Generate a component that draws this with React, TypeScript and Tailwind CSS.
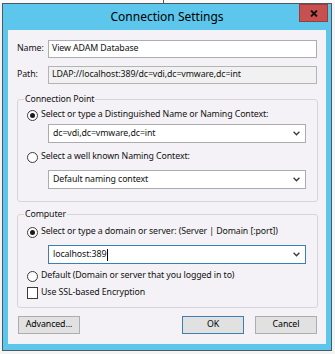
import clsx from "clsx";

function Chevron() {
  return (
    <svg width="7" height="5" viewBox="0 0 7 5" className="shrink-0">
      <path d="M0.6 0.8 L3.5 3.8 L6.4 0.8" fill="none" stroke="#3a3a3a" strokeWidth="1.3" />
    </svg>
  );
}

function Radio({ checked }: { checked?: boolean }) {
  return (
    <span className="w-[11px] h-[11px] shrink-0 rounded-full border border-[#3b3b3b] bg-white flex items-center justify-center">
      {checked && <span className="w-[5px] h-[5px] rounded-full bg-[#1a1a1a]" />}
    </span>
  );
}

function Combo({ value, focused, cursor }: { value: string; focused?: boolean; cursor?: boolean }) {
  return (
    <div
      className={clsx(
        "ml-[21px] w-[258px] h-[19px] flex items-center justify-between bg-white border pl-[4px] pr-[5px]",
        focused ? "border-[#3c7fb1]" : "border-[#acacac]"
      )}
    >
      <span className="flex items-center">
        {value}
        {cursor && <span className="ml-px w-px h-[12px] bg-black" />}
      </span>
      <Chevron />
    </div>
  );
}

function Button({ label, primary, className }: { label: string; primary?: boolean; className?: string }) {
  return (
    <button
      className={clsx(
        "w-[62px] h-[18px] flex items-center justify-center border bg-[#e1e1e1] text-black",
        primary ? "border-[#3c7fb1]" : "border-[#adadad]",
        className
      )}
    >
      {label}
    </button>
  );
}

export default function App() {
  return (
    <div className="w-[335px] h-[354px] bg-[#f4f4f4] overflow-hidden font-['Noto_Sans',sans-serif] text-[8.8px] tracking-[-0.1px] text-[#111]">
      {/* desktop strip above the dialog */}
      <div className="h-[3px] bg-[#fafafa] flex">
        <div className="ml-[163px] w-px h-full bg-[#555]" />
      </div>

      {/* dialog window */}
      <div className="ml-[2px] w-[330px] h-[348px] border border-[#4e5a61] bg-[#5cc6ec] flex flex-col">
        <div className="relative h-[26px] shrink-0 flex items-center justify-center">
          <span className="text-[12px] leading-none tracking-normal text-black">Connection Settings</span>
          <button className="absolute top-0 right-[3px] w-[29px] h-[18px] bg-[#c75050] border border-[#9a3c38] flex items-center justify-center">
            <svg width="8" height="7" viewBox="0 0 8 7">
              <path d="M1 0.5 L7 6.5 M7 0.5 L1 6.5" stroke="#111" strokeWidth="1.8" />
            </svg>
          </button>
        </div>

        <div className="px-[5px]">
          <div className="h-[314px] bg-[#f4f2f6] pl-[9px] pr-[8px] pt-[10px] flex flex-col">
            <div className="flex items-center h-[18px]">
              <span className="w-[31px]">Name:</span>
              <div className="w-[269px] h-[18px] bg-white border border-[#abadb3] pl-[3px] flex items-center">
                View ADAM Database
              </div>
            </div>
            <div className="mt-[8px] flex items-center h-[18px]">
              <span className="w-[31px]">Path:</span>
              <div className="w-[269px] h-[18px] bg-[#f1f1f1] border border-[#b4b4b4] pl-[3px] flex items-center">
                LDAP://localhost:389/dc=vdi,dc=vmware,dc=int
              </div>
            </div>

            <fieldset className="mt-[9px] w-[301px] border border-[#d6d6da] rounded-[3px]">
              <legend className="ml-[6px] px-[1px] leading-[13px]">Connection Point</legend>
              <div className="pl-[9px] pb-[12px] flex flex-col">
                <label className="h-[18px] flex items-center gap-[3px]">
                  <Radio checked />
                  <span>Select or type a Distinguished Name or Naming Context:</span>
                </label>
                <Combo value="dc=vdi,dc=vmware,dc=int" />
                <label className="mt-[5px] h-[18px] flex items-center gap-[3px]">
                  <Radio />
                  <span>Select a well known Naming Context:</span>
                </label>
                <div className="mt-[4px]">
                  <Combo value="Default naming context" />
                </div>
              </div>
            </fieldset>

            <fieldset className="mt-[6px] w-[301px] border border-[#d6d6da] rounded-[3px]">
              <legend className="ml-[6px] px-[1px] leading-[13px]">Computer</legend>
              <div className="pl-[9px] pb-[7px] flex flex-col">
                <label className="mt-[2px] h-[18px] flex items-center gap-[3px]">
                  <Radio checked />
                  <span>Select or type a domain or server: (Server | Domain [:port])</span>
                </label>
                <div className="mt-[4px]">
                  <Combo value="localhost:389" focused cursor />
                </div>
                <label className="mt-[3px] h-[18px] flex items-center gap-[3px]">
                  <Radio />
                  <span>Default (Domain or server that you logged in to)</span>
                </label>
                <label className="mt-[1px] h-[14px] flex items-center gap-[3px]">
                  <span className="w-[11px] h-[12px] shrink-0 border border-[#3b3b3b] bg-white" />
                  <span>Use SSL-based Encryption</span>
                </label>
              </div>
            </fieldset>

            <div className="mt-[8px] flex items-center justify-between">
              <Button label="Advanced..." className="ml-px" />
              <div className="flex gap-[11px] mr-px">
                <Button label="OK" primary />
                <Button label="Cancel" />
              </div>
            </div>
          </div>
        </div>
      </div>
    </div>
  );
}
